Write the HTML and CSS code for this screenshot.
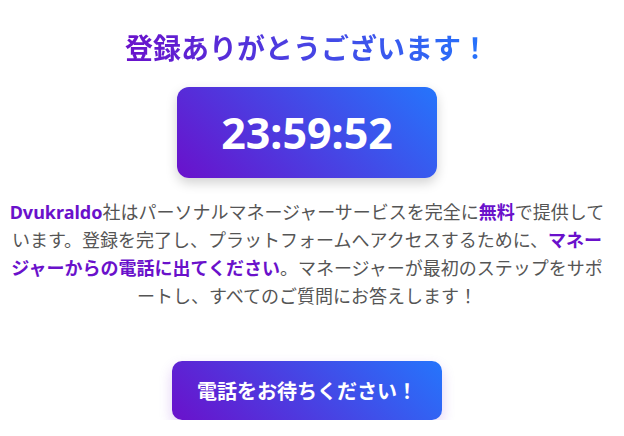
FILE: index.html
```html
<!DOCTYPE html>
<html lang="ja">
<head>
<meta charset="utf-8">
<link rel="stylesheet" href="styles.css">
</head>
<body>
<main class="page">
  <h1 class="title">登録ありがとうございます！</h1>
  <div class="timer">23:59:52</div>
  <p class="message"><strong>Dvukraldo</strong>社はパーソナルマネージャーサービスを完全に<strong>無料</strong>で提供しています。登録を完了し、プラットフォームへアクセスするために、<strong>マネージャーからの電話に出てください</strong>。マネージャーが最初のステップをサポートし、すべてのご質問にお答えします！</p>
  <button class="cta" type="button">電話をお待ちください！</button>
</main>
</body>
</html>
```
FILE: styles.css
```css
html, body {
  margin: 0;
  padding: 0;
  background: #ffffff;
}
body {
  font-family: "Noto Sans", "Noto Sans CJK JP", sans-serif;
}
.page {
  width: 600px;
  margin: 0 17px 0 7px;
  padding-top: 27px;
  display: flex;
  flex-direction: column;
  align-items: center;
}
.title {
  margin: 0;
  font-size: 28px;
  line-height: 42px;
  font-weight: 700;
  background: linear-gradient(90deg, #6a11cb, #2575fc);
  -webkit-background-clip: text;
  background-clip: text;
  color: transparent;
}
.timer {
  margin-top: 18px;
  width: 260px;
  height: 91px;
  display: flex;
  align-items: center;
  justify-content: center;
  border-radius: 12px;
  background: linear-gradient(45deg, #6a11cb, #2575fc);
  color: #fff;
  font-size: 43px;
  font-weight: 700;
  box-shadow: 0 5px 12px rgba(0,0,0,0.18);
}
.message {
  margin: 20px 0 0;
  font-size: 18px;
  line-height: 28px;
  color: #555;
  text-align: center;
}
.message strong {
  color: #6a11cb;
  font-weight: 700;
}
.cta {
  margin-top: 51px;
  width: 270px;
  height: 59px;
  border: none;
  border-radius: 10px;
  background: linear-gradient(45deg, #6a11cb, #2575fc);
  color: #fff;
  font-family: inherit;
  font-size: 20px;
  font-weight: 700;
  box-shadow: 0 6px 14px rgba(106,17,203,0.2);
}
```
